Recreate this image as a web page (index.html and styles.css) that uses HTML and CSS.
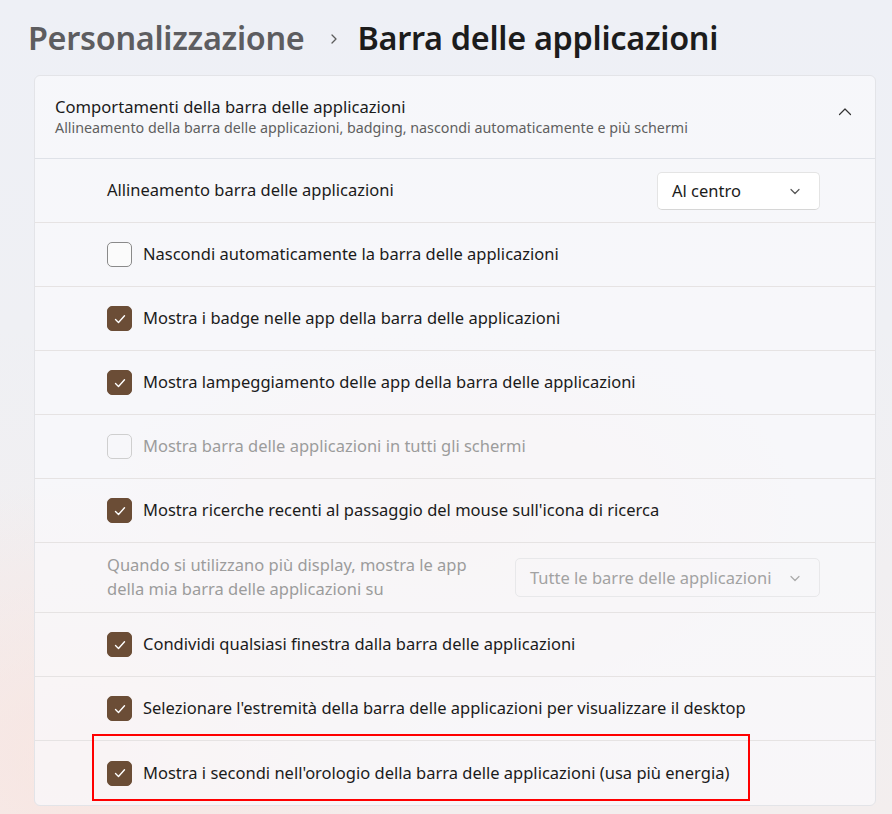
FILE: index.html
```html
<!DOCTYPE html>
<html lang="it">
<head>
<meta charset="utf-8">
<title>Barra delle applicazioni</title>
<link rel="stylesheet" href="styles.css">
</head>
<body>
<div class="page">
  <h1 class="crumbs">
    <span class="crumb-parent">Personalizzazione</span>
    <svg class="crumb-sep" width="14" height="14" viewBox="0 0 14 14"><path d="M5 3 L9 7 L5 11" fill="none" stroke="#5c5c5c" stroke-width="1.3" stroke-linecap="round" stroke-linejoin="round"/></svg>
    <span class="crumb-current">Barra delle applicazioni</span>
  </h1>

  <section class="card">
    <div class="card-head">
      <div class="head-text">
        <div class="head-title">Comportamenti della barra delle applicazioni</div>
        <div class="head-sub">Allineamento della barra delle applicazioni, badging, nascondi automaticamente e più schermi</div>
      </div>
      <svg class="head-chevron" width="16" height="16" viewBox="0 0 16 16"><path d="M2.5 10.5 L8 5 L13.5 10.5" fill="none" stroke="#333" stroke-width="1.2" stroke-linecap="round" stroke-linejoin="round"/></svg>
    </div>

    <div class="row">
      <span class="label">Allineamento barra delle applicazioni</span>
      <div class="select select-small">
        <span>Al centro</span>
        <svg width="12" height="12" viewBox="0 0 12 12"><path d="M2 4.5 L6 8.5 L10 4.5" fill="none" stroke="#555" stroke-width="1.2" stroke-linecap="round" stroke-linejoin="round"/></svg>
      </div>
    </div>

    <div class="row">
      <span class="box"></span>
      <span class="label">Nascondi automaticamente la barra delle applicazioni</span>
    </div>

    <div class="row">
      <span class="box checked"><svg width="14" height="14" viewBox="0 0 14 14"><path d="M2.5 7.5 L5.5 10.5 L11.5 3.8" fill="none" stroke="#fff" stroke-width="1.4" stroke-linecap="round" stroke-linejoin="round"/></svg></span>
      <span class="label">Mostra i badge nelle app della barra delle applicazioni</span>
    </div>

    <div class="row">
      <span class="box checked"><svg width="14" height="14" viewBox="0 0 14 14"><path d="M2.5 7.5 L5.5 10.5 L11.5 3.8" fill="none" stroke="#fff" stroke-width="1.4" stroke-linecap="round" stroke-linejoin="round"/></svg></span>
      <span class="label">Mostra lampeggiamento delle app della barra delle applicazioni</span>
    </div>

    <div class="row">
      <span class="box disabled"></span>
      <span class="label muted">Mostra barra delle applicazioni in tutti gli schermi</span>
    </div>

    <div class="row">
      <span class="box checked"><svg width="14" height="14" viewBox="0 0 14 14"><path d="M2.5 7.5 L5.5 10.5 L11.5 3.8" fill="none" stroke="#fff" stroke-width="1.4" stroke-linecap="round" stroke-linejoin="round"/></svg></span>
      <span class="label">Mostra ricerche recenti al passaggio del mouse sull'icona di ricerca</span>
    </div>

    <div class="row row-tall">
      <span class="label muted two-line">Quando si utilizzano più display, mostra le app della mia barra delle applicazioni su</span>
      <div class="select select-wide disabled-select">
        <span>Tutte le barre delle applicazioni</span>
        <svg width="12" height="12" viewBox="0 0 12 12"><path d="M2 4.5 L6 8.5 L10 4.5" fill="none" stroke="#aaa" stroke-width="1.2" stroke-linecap="round" stroke-linejoin="round"/></svg>
      </div>
    </div>

    <div class="row">
      <span class="box checked"><svg width="14" height="14" viewBox="0 0 14 14"><path d="M2.5 7.5 L5.5 10.5 L11.5 3.8" fill="none" stroke="#fff" stroke-width="1.4" stroke-linecap="round" stroke-linejoin="round"/></svg></span>
      <span class="label">Condividi qualsiasi finestra dalla barra delle applicazioni</span>
    </div>

    <div class="row">
      <span class="box checked"><svg width="14" height="14" viewBox="0 0 14 14"><path d="M2.5 7.5 L5.5 10.5 L11.5 3.8" fill="none" stroke="#fff" stroke-width="1.4" stroke-linecap="round" stroke-linejoin="round"/></svg></span>
      <span class="label">Selezionare l'estremità della barra delle applicazioni per visualizzare il desktop</span>
    </div>

    <div class="row row-last">
      <span class="box checked"><svg width="14" height="14" viewBox="0 0 14 14"><path d="M2.5 7.5 L5.5 10.5 L11.5 3.8" fill="none" stroke="#fff" stroke-width="1.4" stroke-linecap="round" stroke-linejoin="round"/></svg></span>
      <span class="label">Mostra i secondi nell'orologio della barra delle applicazioni (usa più energia)</span>
      <span class="highlight"></span>
    </div>
  </section>
</div>
</body>
</html>
```

FILE: styles.css
```css
* { box-sizing: border-box; }

html, body {
  margin: 0;
  height: 100%;
}

body {
  font-family: "Noto Sans", "Open Sans", sans-serif;
  color: #1b1b1b;
  background:
    radial-gradient(ellipse 500px 400px at 80px 760px, rgba(250, 226, 220, 0.7), rgba(250, 226, 220, 0) 70%),
    radial-gradient(ellipse 500px 300px at 450px 520px, rgba(250, 228, 222, 0.5), rgba(250, 228, 222, 0) 70%),
    linear-gradient(180deg, #eef0f6 0%, #eff0f4 40%, #f3eeee 100%);
  overflow: hidden;
}

.page {
  padding: 0 16px 0 28px;
}

.crumbs {
  margin: 0;
  height: 75px;
  display: flex;
  align-items: center;
  padding-bottom: 2px;
  font-weight: 600;
  font-size: 32.4px;
  letter-spacing: -0.3px;
}

.crumb-parent { color: #5d5d60; }
.crumb-current { color: #1c1c1c; }
.crumb-sep { margin: 4px 16px 0 23px; }

.card {
  margin-left: 6px;
  background: rgba(250, 250, 252, 0.72);
  border: 1px solid #e3e4e8;
  border-radius: 6px;
}

.card-head {
  height: 83px;
  display: flex;
  align-items: center;
  padding: 0 22px 0 20px;
  border-bottom: 1px solid #dfe2e8;
}

.head-text { flex: 1; }

.head-title {
  font-size: 16.6px;
  line-height: 22px;
  color: #1b1b1b;
}

.head-sub {
  font-size: 14.3px;
  line-height: 20px;
  color: #5f5f5f;
}

.head-chevron { margin-top: -10px; }

.row {
  position: relative;
  height: 64px;
  display: flex;
  align-items: center;
  padding: 0 55px 0 72px;
  border-bottom: 1px solid #e6e3e3;
}

.row-tall { height: 70px; }
.row-last { border-bottom: none; }

.label {
  font-size: 16.5px;
  color: #1b1b1b;
  flex: 1;
  margin-top: -2px;
}

.label.muted { color: #9c9c9c; }

.two-line {
  flex: none;
  width: 380px;
  line-height: 24px;
}

.box {
  flex: none;
  width: 25px;
  height: 25px;
  border-radius: 5px;
  border: 1px solid #8a8a8a;
  background: #fbfbfb;
  margin-right: 11px;
  display: flex;
  align-items: center;
  justify-content: center;
}

.box.checked {
  background: #6b4d36;
  border-color: #6b4d36;
}

.box.disabled {
  border-color: #cfcfcf;
  background: transparent;
}

.select {
  flex: none;
  margin-left: auto;
  height: 38px;
  display: flex;
  align-items: center;
  justify-content: space-between;
  background: #ffffff;
  border: 1px solid #e4e4e4;
  border-bottom-color: #d6d6d6;
  border-radius: 5px;
  padding: 0 18px 0 14px;
  font-size: 16.5px;
  color: #1b1b1b;
}

.select-small { width: 163px; }

.select-wide {
  width: 305px;
  height: 39px;
}

.disabled-select {
  background: transparent;
  border-color: #e8e8ea;
  color: #a2a2a2;
}

.highlight {
  position: absolute;
  left: 57px;
  top: -7px;
  width: 658px;
  height: 67px;
  border: 2px solid #ff0000;
  pointer-events: none;
}
```
